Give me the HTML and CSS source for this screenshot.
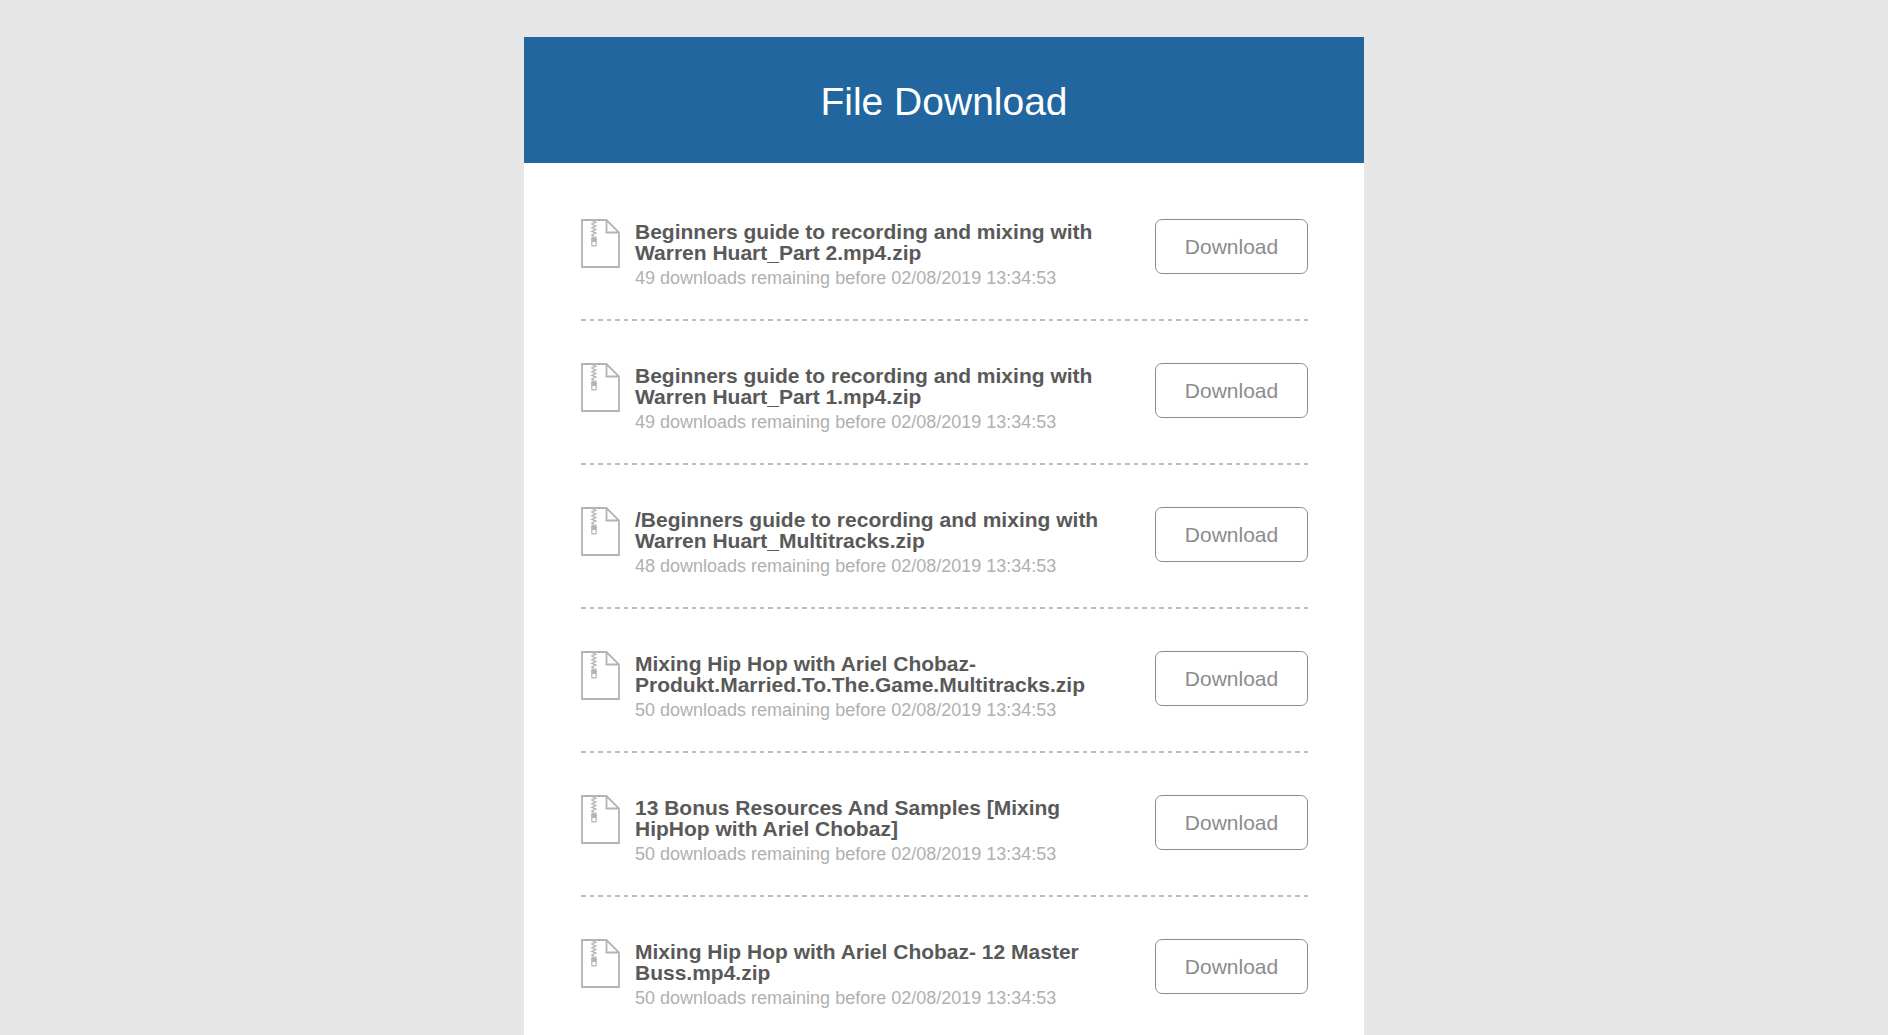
FILE: index.html
```html
<!DOCTYPE html>
<html lang="en">
<head>
    <meta charset="UTF-8">
    <meta name="viewport" content="width=device-width, initial-scale=1.0">
    <title>File Download</title>
    <link rel="stylesheet" href="styles.css">
</head>
<body>
    <svg class="sprite" aria-hidden="true">
        <symbol id="zip" viewBox="0 0 39 49">
            <path d="M1 1H25.5L38 13.5V48H1Z M25.5 1V13.5H38" fill="none" stroke="#b3b3b3" stroke-width="1.8"/>
            <path d="M11 1.5l3.6 1.8-3.6 1.8 3.6 1.8-3.6 1.8 3.6 1.8-3.6 1.8 3.6 1.8-3.6 1.8 2 1" fill="none" stroke="#bcbcbc" stroke-width="1.6"/>
            <rect x="10.8" y="18.2" width="4.4" height="8.6" rx="0.8" fill="none" stroke="#bcbcbc" stroke-width="1.4"/>
            <path d="M11 19h4v4h-4z" fill="#b3b3b3"/>
        </symbol>
    </svg>

    <main class="card">
        <header class="card-header">
            <h1>File Download</h1>
        </header>
        <ul class="files">
            <li class="file">
                <svg class="file-icon" aria-hidden="true"><use href="#zip"/></svg>
                <div class="file-info">
                    <h2>Beginners guide to recording and mixing with Warren Huart_Part 2.mp4.zip</h2>
                    <p>49 downloads remaining before 02/08/2019 13:34:53</p>
                </div>
                <button type="button" class="download">Download</button>
            </li>
            <li class="file">
                <svg class="file-icon" aria-hidden="true"><use href="#zip"/></svg>
                <div class="file-info">
                    <h2>Beginners guide to recording and mixing with Warren Huart_Part 1.mp4.zip</h2>
                    <p>49 downloads remaining before 02/08/2019 13:34:53</p>
                </div>
                <button type="button" class="download">Download</button>
            </li>
            <li class="file">
                <svg class="file-icon" aria-hidden="true"><use href="#zip"/></svg>
                <div class="file-info">
                    <h2>/Beginners guide to recording and mixing with Warren Huart_Multitracks.zip</h2>
                    <p>48 downloads remaining before 02/08/2019 13:34:53</p>
                </div>
                <button type="button" class="download">Download</button>
            </li>
            <li class="file">
                <svg class="file-icon" aria-hidden="true"><use href="#zip"/></svg>
                <div class="file-info">
                    <h2>Mixing Hip Hop with Ariel Chobaz-Produkt.Married.To.The.Game.Multitracks.zip</h2>
                    <p>50 downloads remaining before 02/08/2019 13:34:53</p>
                </div>
                <button type="button" class="download">Download</button>
            </li>
            <li class="file">
                <svg class="file-icon" aria-hidden="true"><use href="#zip"/></svg>
                <div class="file-info">
                    <h2>13 Bonus Resources And Samples [Mixing HipHop with Ariel Chobaz]</h2>
                    <p>50 downloads remaining before 02/08/2019 13:34:53</p>
                </div>
                <button type="button" class="download">Download</button>
            </li>
            <li class="file">
                <svg class="file-icon" aria-hidden="true"><use href="#zip"/></svg>
                <div class="file-info">
                    <h2>Mixing Hip Hop with Ariel Chobaz- 12 Master Buss.mp4.zip</h2>
                    <p>50 downloads remaining before 02/08/2019 13:34:53</p>
                </div>
                <button type="button" class="download">Download</button>
            </li>
        </ul>
    </main>
</body>
</html>
```
FILE: styles.css
```css
* {
    box-sizing: border-box;
}
body {
    display: flex;
    flex-direction: column;
    min-height: 100vh;
    margin: 0;
    padding-top: 37px;
    background-color: #e6e6e6;
    font-family: "Helvetica Neue", "Liberation Sans", Arial, sans-serif;
}
h1, h2, p {
    margin: 0;
}
.sprite {
    display: none;
}
.card {
    flex: 1;
    width: 100%;
    max-width: 840px;
    margin: 0 auto;
    background-color: #fff;
}
.card-header {
    padding: 43px 56px 39px;
    background-color: #21669e;
    color: #fff;
    text-align: center;
}
.card-header h1 {
    font-size: 39px;
    font-weight: normal;
    line-height: 44px;
}
.files {
    margin: 0;
    padding: 14px 56px 0 57px;
    list-style: none;
}
.file {
    display: flex;
    align-items: flex-start;
    padding: 42px 0 32px;
    /* dashed divider */
    background: repeating-linear-gradient(to right, #bbb 0 5px, transparent 5px 9px, #bbb 9px 13px, transparent 13px 17px) left bottom / 100% 2px no-repeat;
}
.file:last-child {
    padding-bottom: 0;
    background: none;
}
.file-icon {
    flex: none;
    width: 39px;
    height: 49px;
    margin-right: 15px;
}
.file-info {
    flex: 1;
    padding: 2px 50px 0 0;
}
.file-info h2 {
    color: #595959;
    font-size: 21px;
    line-height: 21px;
}
.file-info p {
    margin-top: 4px;
    color: #b0b0b0;
    font-size: 18px;
    line-height: 22px;
}
.download {
    flex: none;
    width: 153px;
    height: 55px;
    border: 1px solid #8c8c8c;
    border-radius: 7px;
    background-color: #fff;
    color: #8c8c8c;
    font-family: inherit;
    font-size: 21px;
    cursor: pointer;
}
.download:hover {
    background-color: #f5f5f5;
}
```
